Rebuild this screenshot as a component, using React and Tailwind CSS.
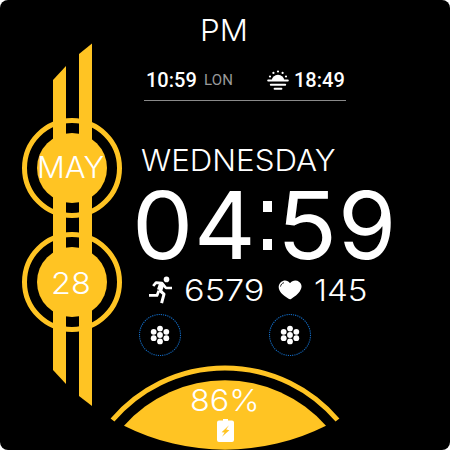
import { useLayoutEffect, useRef } from "react";

// Stretches a line of text horizontally so that it fills its box, like an extended typeface.
function WideText({ children, className = "" }) {
  const ref = useRef(null);
  useLayoutEffect(() => {
    const fit = () => {
      const el = ref.current;
      if (!el) return;
      el.style.transform = `scaleX(${el.parentElement.clientWidth / el.offsetWidth})`;
    };
    fit();
    document.fonts.ready.then(fit);
  }, []);
  return (
    <div className={`flex shrink-0 whitespace-nowrap font-['Inter',sans-serif] ${className}`}>
      <span ref={ref} className="block w-max shrink-0 origin-left">
        {children}
      </span>
    </div>
  );
}

function Ornament() {
  return (
    <svg className="block h-[450px] w-[137px]" viewBox="0 0 137 450" fill="#ffc423">
      <circle cx="72" cy="168" r="47.5" fill="none" stroke="#ffc423" strokeWidth="5" />
      <circle cx="72" cy="282" r="47.5" fill="none" stroke="#ffc423" strokeWidth="5" />
      <circle cx="72" cy="168" r="35" />
      <circle cx="72" cy="282" r="35" />
      <path d="M53 80L66 66V384L53 370Z" />
      <path d="M79 54L92 43.5V406L79 396Z" />
    </svg>
  );
}

function SunIcon() {
  return (
    <svg className="mt-1 h-[22px] w-[22px] shrink-0" viewBox="0 0 22 22" fill="#fff">
      <path d="M4.800 10.500a6.200 5.800 0 0 1 12.400 0Z" />
      <path d="M1.200 10.600h19.600M3.800 14.700h14.400M7.600 18.700h6.800" stroke="#fff" strokeWidth="2" strokeLinecap="round" />
      <circle cx="11" cy="1.500" r="1.100" />
      <circle cx="6.400" cy="2.900" r="1.100" />
      <circle cx="15.600" cy="2.900" r="1.100" />
      <circle cx="3" cy="6.500" r="1.100" />
      <circle cx="19" cy="6.500" r="1.100" />
    </svg>
  );
}

function RunnerIcon() {
  return (
    <svg className="h-[28px] w-[24px] shrink-0" viewBox="0 0 24 28" fill="none" stroke="#fff" strokeLinecap="butt" strokeLinejoin="round">
      <circle cx="17.500" cy="3.400" r="2.800" fill="#fff" stroke="none" />
      <path d="M4.200 10L7 6.600L13 7.200L17 12H23" strokeWidth="2.700" />
      <path d="M12.800 7.600L10.600 14.200" strokeWidth="5.400" />
      <path d="M10.200 14L15 18.200L12.600 27.200" strokeWidth="3" />
      <path d="M9.800 14.800L8 19.400H0" strokeWidth="2.800" />
    </svg>
  );
}

function HeartIcon() {
  return (
    <svg className="h-[20px] w-[24px] shrink-0" viewBox="0 0 24 20">
      <path d="M12 3.200C9.800-.3 5.500-.1 3 2C-.5 5.200.3 9.800 3.200 13C5.600 15.700 8.200 17.200 10.600 18.800Q12 19.700 13.400 18.700C16.600 16.600 19.700 14.400 21.700 11.500C24.200 7.900 24.200 4 21.300 1.900C18.200-.3 14.200.4 12 3.200Z" fill="#fff" />
      <path d="M2.600 6.200C2.900 4.500 4 3.300 5.600 2.800" fill="none" stroke="#000" strokeWidth="0.9" strokeLinecap="round" />
    </svg>
  );
}

function Shortcut() {
  return (
    <svg className="h-[42px] w-[42px]" viewBox="0 0 42 42" fill="#fff">
      <circle cx="21" cy="21" r="20.500" fill="none" stroke="#126bc4" strokeWidth="1.100" strokeDasharray="1.200 1" />
      <circle cx="21" cy="21" r="2.900" />
      <circle cx="21" cy="14.600" r="2.900" />
      <circle cx="21" cy="27.400" r="2.900" />
      <circle cx="14.700" cy="17.800" r="2.900" />
      <circle cx="27.300" cy="17.800" r="2.900" />
      <circle cx="14.700" cy="24.200" r="2.900" />
      <circle cx="27.300" cy="24.200" r="2.900" />
    </svg>
  );
}

function Battery() {
  return (
    <div className="absolute bottom-0 left-[105px] h-[90px] w-[240px]">
      <svg className="block h-[90px] w-[240px]" viewBox="105 360 240 90">
        <path d="M112.500 420A147.500 147.500 0 0 1 337.500 420" fill="none" stroke="#ffc423" strokeWidth="5" />
        <path d="M124 425.700A135 135 0 0 1 326 425.700A225 225 0 0 1 124 425.700Z" fill="#ffc423" />
      </svg>
      <div className="absolute inset-0 flex flex-col items-center pt-[25px]">
        <WideText className="w-[70px] text-[30px] font-light leading-[30px]">86%</WideText>
        <svg className="mt-[4px] h-[23px] w-[17px]" viewBox="0 0 17 23">
          <path d="M6 0h5v1.500h4a2 2 0 0 1 2 2V21a2 2 0 0 1-2 2H2a2 2 0 0 1-2-2V3.500a2 2 0 0 1 2-2h4Z" fill="#fff" />
          <path d="M12 6.200L4.600 13.200L7.600 13.600L5 17.800L12.400 11.200L9.200 10.600Z" fill="#ffc423" />
        </svg>
      </div>
    </div>
  );
}

export default function App() {
  return (
    <div className="h-[450px] w-[450px] bg-white">
      <main className="relative flex h-[450px] w-[450px] overflow-hidden rounded-[8px] bg-black text-white">
        <aside className="relative w-[137px] shrink-0">
          <Ornament />
          <div className="absolute inset-0 flex flex-col pt-[152px]">
            <WideText className="ml-[37px] w-[67px] text-[30px] font-light leading-[30px]">MAY</WideText>
            <WideText className="ml-[51px] mt-[86px] w-[40px] text-[30px] font-light leading-[30px]">28</WideText>
          </div>
        </aside>

        <section className="flex w-[313px] flex-col">
          <WideText className="ml-[63px] mt-[15px] w-[48px] text-[30px] font-light leading-[30px]">PM</WideText>

          <div className="ml-[7px] mt-[21px] flex h-[35px] w-[202px] items-start border-b border-[#8a8a8a] font-['Roboto',sans-serif] font-medium">
            <div className="w-[60px] pl-[2px] text-[20px] leading-[28px]">10:59</div>
            <div className="w-[63px] text-[15px] font-normal leading-[29px] tracking-[0.200px] text-[#999999]">LON</div>
            <SunIcon />
            <div className="pl-[5px] text-[20px] leading-[28px]">18:49</div>
          </div>

          <WideText className="ml-[4px] mt-[44px] w-[195px] text-[30px] font-light leading-[30px]">WEDNESDAY</WideText>

          <div className="mt-[15px] flex h-[70px] text-[94px] leading-[70px]">
            <WideText className="-ml-[5px] w-[61px]">0</WideText>
            <WideText className="ml-[1px] w-[62px]">4</WideText>
            <div className="ml-[7px] mr-[5px] flex w-[10px] shrink-0 flex-col justify-between pb-[10px] pt-[11px]">
              <span className="h-[11px] w-[9px] bg-white" />
              <span className="h-[11px] w-[9px] bg-white" />
            </div>
            <WideText className="-ml-[1px] w-[60px]">5</WideText>
            <WideText className="ml-[1px] w-[58px]">9</WideText>
          </div>

          <div className="ml-[12px] mt-[15px] flex h-[30px] items-center">
            <RunnerIcon />
            <WideText className="ml-[11px] w-[80px] text-[30px] font-light leading-[30px]">6579</WideText>
            <div className="ml-[14px]"><HeartIcon /></div>
            <WideText className="ml-[12px] w-[53px] text-[30px] font-light leading-[30px]">145</WideText>
          </div>

          <div className="ml-[2px] mt-[9px] flex gap-[88px]">
            <Shortcut />
            <Shortcut />
          </div>
        </section>

        <Battery />
      </main>
    </div>
  );
}
